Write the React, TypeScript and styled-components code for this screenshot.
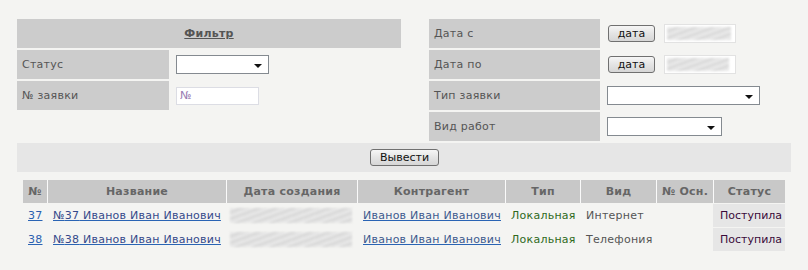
import React from "react";
import styled, { createGlobalStyle } from "styled-components";

const GlobalStyle = createGlobalStyle`
	html, body {
		margin: 0;
		padding: 0;
		background: #f4f4f2;
	}
	body {
		font-family: "DejaVu Sans", Verdana, sans-serif;
		font-size: 11px;
		letter-spacing: 0.25px;
		color: #555;
	}
`;

const Page = styled.div`
	width: 808px;
	box-sizing: border-box;
	padding: 19px 17px 0 17px;
`;

const FilterArea = styled.div`
	display: flex;
	gap: 28px;
`;

const FilterGrid = styled.div<{ $width: number; $label: number }>`
	width: ${p => p.$width}px;
	display: grid;
	grid-template-columns: ${p => p.$label}px 1fr;
	grid-auto-rows: 29px;
	gap: 2px;
`;

const FilterHeader = styled.div`
	grid-column: 1 / -1;
	background: #cccccc;
	display: flex;
	align-items: center;
	justify-content: center;
	font-weight: bold;
	color: #555;
	text-decoration: underline;
`;

const Label = styled.div`
	background: #cccccc;
	display: flex;
	align-items: center;
	padding-left: 5px;
	color: #555;
`;

const Field = styled.div`
	display: flex;
	align-items: center;
	padding-left: 5px;
	gap: 9px;
`;

const SelectBox = styled.div<{ $width: number }>`
	position: relative;
	width: ${p => p.$width}px;
	height: 19px;
	box-sizing: border-box;
	background: #fff;
	border: 1px solid #848a90;

	&::after {
		content: "";
		position: absolute;
		right: 6px;
		top: 8px;
		border-left: 4px solid transparent;
		border-right: 4px solid transparent;
		border-top: 4px solid #111;
	}
`;

const TextInput = styled.input`
	width: 83px;
	height: 18px;
	box-sizing: border-box;
	border: 1px solid #dcdde4;
	background: #fff;
	font-family: "DejaVu Sans", Verdana, sans-serif;
	font-size: 11px;
	padding: 0 3px;
	margin: 0;
	outline: none;

	&::placeholder {
		color: #9a7cb2;
	}
`;

const Button = styled.button<{ $width: number }>`
	width: ${p => p.$width}px;
	height: 17px;
	box-sizing: border-box;
	margin: 0 0 0 1px;
	padding: 0;
	border: 1px solid #707070;
	border-radius: 3px;
	background: linear-gradient(#f6f6f6, #e4e4e4 50%, #d6d6d6);
	font-family: "DejaVu Sans", Verdana, sans-serif;
	font-size: 11px;
	line-height: 14px;
	color: #111;
`;

const BlurredInput = styled.div`
	width: 72px;
	height: 19px;
	box-sizing: border-box;
	background: #fff;
	border: 1px solid #e2e2e2;
	overflow: hidden;
`;

const Smudge = styled.div<{ $w: number; $h: number }>`
	width: ${p => p.$w}px;
	height: ${p => p.$h}px;
	margin: 2px;
	background: repeating-linear-gradient(
		160deg,
		#d8d8d8 0px,
		#eeeeee 2px,
		#cecece 4px,
		#ebebeb 6px
	);
	filter: blur(1.1px);
	opacity: 0.9;
`;

const Bar = styled.div`
	margin-top: 2px;
	height: 29px;
	background: #e6e6e6;
	display: flex;
	align-items: center;
	justify-content: center;
`;

const Table = styled.table`
	width: 762px;
	margin: 7px 0 0 6px;
	border-collapse: separate;
	border-spacing: 0 1px;
	table-layout: fixed;
`;

const Th = styled.th<{ $w: number }>`
	width: ${p => p.$w}px;
	box-sizing: border-box;
	height: 23px;
	padding: 0 2px;
	background: #c8c8c8;
	border-left: 1px solid #fafafa;
	color: #666;
	font-weight: bold;
	text-align: center;
	white-space: nowrap;
	overflow: hidden;
	&:first-child {
		border-left: none;
	}
`;

const Td = styled.td<{ $status?: boolean; $color?: string; $pad?: number }>`
	height: 23px;
	box-sizing: border-box;
	padding: 0 2px 0 ${p => p.$pad ?? 5}px;
	border-left: 1px solid transparent;
	background: ${p => (p.$status ? "#e6e6e6" : "transparent")};
	color: ${p => p.$color || "#555"};
	letter-spacing: ${p => (p.$status ? "0" : "0.25px")};
	white-space: nowrap;
	overflow: hidden;
	&:first-child {
		border-left: none;
	}
`;

const Link = styled.a<{ $color?: string }>`
	color: ${p => p.$color || "#35498a"};
	text-decoration: underline;
	text-decoration-color: #2a64b4;
	cursor: pointer;
`;

const rows = [
	{ id: 37, kind: "Интернет" },
	{ id: 38, kind: "Телефония" },
];

export default function App() {
	return <>
		<GlobalStyle />
		<Page>
			<FilterArea>
				<FilterGrid $width={384} $label={152}>
					<FilterHeader>Фильтр</FilterHeader>
					<Label>Статус</Label>
					<Field><SelectBox $width={93} /></Field>
					<Label>№ заявки</Label>
					<Field><TextInput placeholder="№" /></Field>
				</FilterGrid>
				<FilterGrid $width={362} $label={171}>
					<Label>Дата с</Label>
					<Field>
						<Button $width={47}>дата</Button>
						<BlurredInput><Smudge $w={64} $h={13} /></BlurredInput>
					</Field>
					<Label>Дата по</Label>
					<Field>
						<Button $width={47}>дата</Button>
						<BlurredInput><Smudge $w={62} $h={13} /></BlurredInput>
					</Field>
					<Label>Тип заявки</Label>
					<Field><SelectBox $width={153} /></Field>
					<Label>Вид работ</Label>
					<Field><SelectBox $width={115} /></Field>
				</FilterGrid>
			</FilterArea>
			<Bar>
				<Button $width={69}>Вывести</Button>
			</Bar>
			<Table>
				<thead>
					<tr>
						<Th $w={24}>№</Th>
						<Th $w={179}>Название</Th>
						<Th $w={131}>Дата создания</Th>
						<Th $w={148}>Контрагент</Th>
						<Th $w={75}>Тип</Th>
						<Th $w={76}>Вид</Th>
						<Th $w={57}>№ Осн.</Th>
						<Th $w={72}>Статус</Th>
					</tr>
				</thead>
				<tbody>
					{rows.map(r => (
						<tr key={r.id}>
							<Td><Link $color="#2a5fb0">{r.id}</Link></Td>
							<Td><Link>№{r.id} Иванов Иван Иванович</Link></Td>
							<Td $pad={1}><Smudge $w={122} $h={15} /></Td>
							<Td><Link $color="#3d5a8e">Иванов Иван Иванович</Link></Td>
							<Td $color="#2f6a1c">Локальная</Td>
							<Td>{r.kind}</Td>
							<Td></Td>
							<Td $status $pad={6} $color="#3a0a3a">Поступила</Td>
						</tr>
					))}
				</tbody>
			</Table>
		</Page>
	</>;
}
